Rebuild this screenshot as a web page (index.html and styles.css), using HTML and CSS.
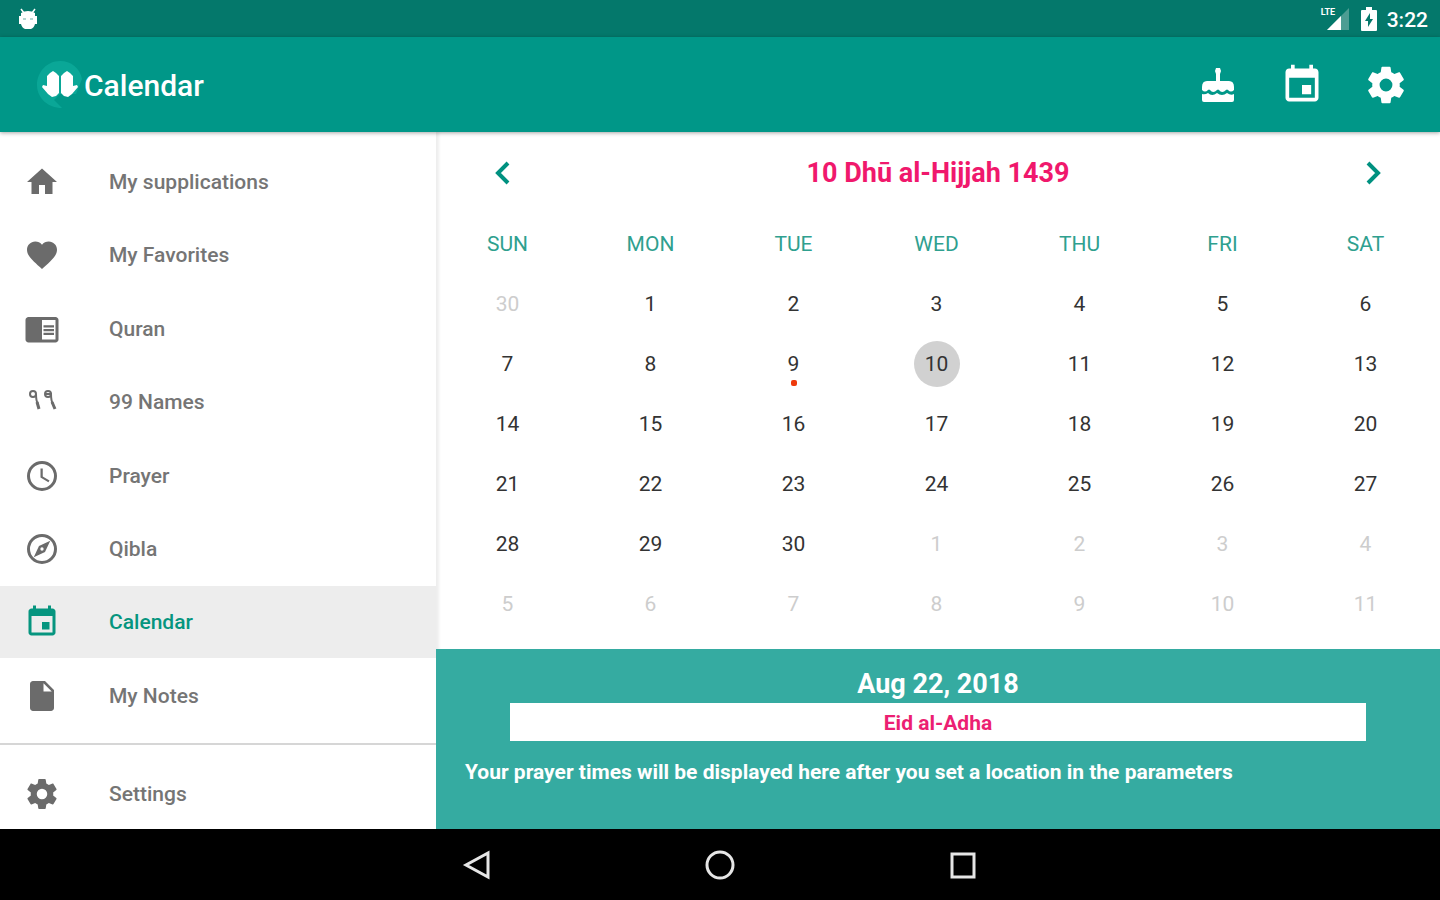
FILE: index.html
```html
<!DOCTYPE html>
<html lang="en">
<head>
<meta charset="utf-8">
<meta name="viewport" content="width=device-width, initial-scale=1">
<title>Calendar</title>
<link rel="stylesheet" href="styles.css">
</head>
<body>
<div class="status">
  <svg class="status-droid" viewBox="0 0 20 22" aria-hidden="true"><path d="M3 1l3 4M17 1l-3 4" stroke="#fff" stroke-width="1.5"/><path d="M3 5q7-4 14 0v3h2v8h-2q-1 4-4 5H7q-3-1-4-5H1V8h2z" fill="#fff"/><path d="M5 11h3M12 11h3" stroke="#9cc9c2" stroke-width="1.5"/></svg>
  <div class="status-right">
    <span class="signal"><span class="lte">LTE</span><svg viewBox="0 0 22 22" aria-hidden="true"><path d="M22 0v22H0z" fill="#4d9d93"/><path d="M14 8v14H0z" fill="#fff"/></svg></span>
    <svg class="battery" viewBox="0 0 16 24" aria-hidden="true"><path d="M5 0h6v3h4q1 0 1 1v19q0 1-1 1H1q-1 0-1-1V4q0-1 1-1h4z" fill="#fff"/><path d="M9 6l-5 8h3v6l5-8H9z" fill="#04786b"/></svg>
    <span class="time">3:22</span>
  </div>
</div>
<header class="toolbar">
  <svg class="logo" viewBox="0 0 48 50" aria-hidden="true"><path d="M26 48C12 48 1 38 1 25S11 1 24 1c11 0 20 7 22 18L40 34H24l-6 6z" fill="#0aa797"/><g fill="#fff"><path d="M17 11l3 2 3 3v17l-3 3-4 1-4-3-6-7 1-2 4 1V16l3-3z"/><path d="M31 11l-3 2-3 3v17l3 3 4 1 4-3 6-7-1-2-4 1V16l-3-3z"/></g></svg>
  <h1 class="title">Calendar</h1>
  <div class="actions">
    <button class="action" aria-label="Birthdays"><svg viewBox="0 0 44 44"><path d="M20 5h4l1 3-1 3v7h9q5 0 5 6v3q-3 3-6 0-1-1-2 0-4 4-7 0-1-1-2 0-4 4-7 0-1-1-2 0-3 3-6 0v-3q0-6 5-6h9v-7l-1-3z"/><path d="M6 31q3 1 6-1 4 4 9 0 5 4 10 0 4 3 7 1v6q0 2-2 2H8q-2 0-2-2z"/></svg></button>
    <button class="action" aria-label="Today"><svg viewBox="0 0 24 24"><path d="M17 12h-5v5h5zM16 1v2H8V1H6v2H5c-1.100 0-2 .9-2 2v14c0 1.100.9 2 2 2h14c1.100 0 2-.9 2-2V5c0-1.100-.9-2-2-2h-1V1zm3 18H5V8h14z"/></svg></button>
    <button class="action" aria-label="Settings"><svg viewBox="0 0 24 24"><path d="M19.430 12.980c.04-.32.07-.64.07-.98s-.03-.66-.07-.98l2.110-1.650c.19-.15.24-.42.12-.64l-2-3.460c-.12-.22-.39-.3-.61-.22l-2.490 1c-.52-.4-1.080-.73-1.690-.98l-.38-2.650C14.460 2.180 14.250 2 14 2h-4c-.25 0-.46.18-.49.42l-.38 2.650c-.61.25-1.170.59-1.690.98l-2.490-1c-.23-.09-.49 0-.61.22l-2 3.460c-.13.22-.07.49.12.64l2.110 1.650c-.04.32-.07.65-.07.98s.03.66.07.98l-2.110 1.650c-.19.15-.24.42-.12.64l2 3.460c.12.22.39.3.61.22l2.490-1c.52.4 1.080.73 1.690.98l.38 2.650c.03.24.24.42.49.42h4c.25 0 .46-.18.49-.42l.38-2.650c.61-.25 1.170-.59 1.690-.98l2.490 1c.23.09.49 0 .61-.22l2-3.460c.12-.22.07-.49-.12-.64zM12 15.500a3.500 3.500 0 1 1 0-7 3.500 3.500 0 0 1 0 7z"/></svg></button>
  </div>
</header>
<div class="body">
  <nav class="drawer" aria-label="Main">
    <div class="menu">
      <a class="item" href="#"><svg viewBox="0 0 24 24"><path d="M10 20v-6h4v6h5v-8h3L12 3 2 12h3v8z"/></svg>My supplications</a>
      <a class="item" href="#"><svg viewBox="0 0 24 24"><path d="M12 21.350l-1.450-1.320C5.400 15.360 2 12.280 2 8.500 2 5.420 4.420 3 7.500 3c1.740 0 3.410.81 4.500 2.090C13.090 3.810 14.760 3 16.500 3 19.580 3 22 5.420 22 8.500c0 3.780-3.400 6.860-8.550 11.540z"/></svg>My Favorites</a>
      <a class="item" href="#"><svg viewBox="0 0 24 24"><path d="M13 12h7v1.500h-7zm0-2.500h7V11h-7zm0 5h7V16h-7zM21 4H3c-1.100 0-2 .9-2 2v13c0 1.100.9 2 2 2h18c1.100 0 2-.9 2-2V6c0-1.100-.9-2-2-2zm0 15h-9V6h9z"/></svg>Quran</a>
      <a class="item" href="#"><svg viewBox="0 0 36 36"><g fill="none" stroke="currentColor" stroke-width="2"><circle cx="9" cy="10" r="3"/><path d="M12 10q0 7 2 10"/><circle cx="24" cy="10" r="3"/><path d="M21 10h6q0 7 2 10"/><path d="M13 18l2 7M28 18l3 7" stroke-width="3"/></g></svg>99 Names</a>
      <a class="item" href="#"><svg viewBox="0 0 24 24"><path d="M12 2a10 10 0 1 0 0 20 10 10 0 0 0 0-20zm0 18a8 8 0 1 1 0-16 8 8 0 0 1 0 16zm.5-13H11v6l5.250 3.150.75-1.230-4.500-2.670z"/></svg>Prayer</a>
      <a class="item" href="#"><svg viewBox="0 0 24 24"><path d="M12 2a10 10 0 1 0 0 20 10 10 0 0 0 0-20zm0 18a8 8 0 1 1 0-16 8 8 0 0 1 0 16zm-5.500-2.500l7.510-3.490L17.500 6.500 9.990 9.990zM12 10.900a1.100 1.100 0 1 1 0 2.200 1.100 1.100 0 0 1 0-2.200z"/></svg>Qibla</a>
      <a class="item active" href="#" aria-current="page"><svg viewBox="0 0 24 24"><path d="M17 12h-5v5h5zM16 1v2H8V1H6v2H5c-1.100 0-2 .9-2 2v14c0 1.100.9 2 2 2h14c1.100 0 2-.9 2-2V5c0-1.100-.9-2-2-2h-1V1zm3 18H5V8h14z"/></svg>Calendar</a>
      <a class="item" href="#"><svg viewBox="0 0 24 24"><path d="M6 2c-1.100 0-2 .9-2 2v16c0 1.100.9 2 2 2h12c1.100 0 2-.9 2-2V8l-6-6zm7 7V3.500L18.500 9z"/></svg>My Notes</a>
    </div>
    <hr class="divider">
    <a class="item" href="#"><svg viewBox="0 0 24 24"><path d="M19.430 12.980c.04-.32.07-.64.07-.98s-.03-.66-.07-.98l2.110-1.650c.19-.15.24-.42.12-.64l-2-3.460c-.12-.22-.39-.3-.61-.22l-2.490 1c-.52-.4-1.080-.73-1.690-.98l-.38-2.650C14.460 2.180 14.250 2 14 2h-4c-.25 0-.46.18-.49.42l-.38 2.650c-.61.25-1.170.59-1.690.98l-2.490-1c-.23-.09-.49 0-.61.22l-2 3.460c-.13.22-.07.49.12.64l2.110 1.650c-.04.32-.07.65-.07.98s.03.66.07.98l-2.110 1.650c-.19.15-.24.42-.12.64l2 3.460c.12.22.39.3.61.22l2.490-1c.52.4 1.080.73 1.690.98l.38 2.650c.03.24.24.42.49.42h4c.25 0 .46-.18.49-.42l.38-2.650c.61-.25 1.170-.59 1.690-.98l2.490 1c.23.09.49 0 .61-.22l2-3.460c.12-.22.07-.49-.12-.64zM12 15.500a3.500 3.500 0 1 1 0-7 3.500 3.500 0 0 1 0 7z"/></svg>Settings</a>
  </nav>
  <main class="content">
    <div class="month">
      <button class="arrow" aria-label="Previous month"><svg viewBox="0 0 16 24"><path d="M14 2L4 12l10 10"/></svg></button>
      <h2 class="month-title">10 Dhū al-Hijjah 1439</h2>
      <button class="arrow" aria-label="Next month"><svg viewBox="0 0 16 24"><path d="M2 2l10 10L2 22"/></svg></button>
    </div>
    <div class="grid-wrap">
    <table class="grid">
      <thead><tr><th>SUN</th><th>MON</th><th>TUE</th><th>WED</th><th>THU</th><th>FRI</th><th>SAT</th></tr></thead>
      <tbody>
        <tr><td><button class="day out">30</button></td><td><button class="day">1</button></td><td><button class="day">2</button></td><td><button class="day">3</button></td><td><button class="day">4</button></td><td><button class="day">5</button></td><td><button class="day">6</button></td></tr>
        <tr><td><button class="day">7</button></td><td><button class="day">8</button></td><td><button class="day marked">9</button></td><td><button class="day selected">10</button></td><td><button class="day">11</button></td><td><button class="day">12</button></td><td><button class="day">13</button></td></tr>
        <tr><td><button class="day">14</button></td><td><button class="day">15</button></td><td><button class="day">16</button></td><td><button class="day">17</button></td><td><button class="day">18</button></td><td><button class="day">19</button></td><td><button class="day">20</button></td></tr>
        <tr><td><button class="day">21</button></td><td><button class="day">22</button></td><td><button class="day">23</button></td><td><button class="day">24</button></td><td><button class="day">25</button></td><td><button class="day">26</button></td><td><button class="day">27</button></td></tr>
        <tr><td><button class="day">28</button></td><td><button class="day">29</button></td><td><button class="day">30</button></td><td><button class="day out">1</button></td><td><button class="day out">2</button></td><td><button class="day out">3</button></td><td><button class="day out">4</button></td></tr>
        <tr><td><button class="day out">5</button></td><td><button class="day out">6</button></td><td><button class="day out">7</button></td><td><button class="day out">8</button></td><td><button class="day out">9</button></td><td><button class="day out">10</button></td><td><button class="day out">11</button></td></tr>
      </tbody>
    </table>
    </div>
    <section class="details">
      <h3 class="date">Aug 22, 2018</h3>
      <p class="event">Eid al-Adha</p>
      <p class="note">Your prayer times will be displayed here after you set a location in the parameters</p>
    </section>
  </main>
</div>
<footer class="navbar">
  <button class="nav" aria-label="Back"><svg viewBox="0 0 30 30"><path d="M26 3v24L4 15z"/></svg></button>
  <button class="nav" aria-label="Home"><svg viewBox="0 0 30 30"><circle cx="15" cy="15" r="13"/></svg></button>
  <button class="nav" aria-label="Recent apps"><svg viewBox="0 0 30 30"><path d="M4 4h22v23H4z"/></svg></button>
</footer>
</body>
</html>
```
FILE: styles.css
```css
* { box-sizing: border-box; }
body {
  margin: 0;
  min-height: 100vh;
  display: flex;
  flex-direction: column;
  background: #fff;
  font-family: Roboto, "Noto Sans", sans-serif;
}
h1, h2, h3, p { margin: 0; }
button {
  padding: 0;
  border: 0;
  background: none;
  font: inherit;
  color: inherit;
  cursor: pointer;
}
svg { display: block; }

.status {
  height: 37px;
  padding: 0 12px 0 18px;
  display: flex;
  align-items: center;
  justify-content: space-between;
  background: #04786b;
  color: #fff;
}
.status-droid { width: 20px; height: 22px; }
.status-right { display: flex; align-items: center; gap: 10px; }
.signal { display: flex; align-items: flex-start; position: relative; padding-left: 6px; margin-right: 2px; }
.signal svg { width: 22px; height: 22px; }
.lte { position: absolute; left: 0; top: -2px; font-size: 9px; font-weight: 700; line-height: 12px; }
.battery { width: 16px; height: 24px; }
.time { font-size: 21px; font-weight: 500; line-height: 26px; padding-top: 2px; }

.toolbar {
  height: 95px;
  padding: 0 32px 0 36px;
  display: flex;
  align-items: center;
  background: #009788;
  color: #fff;
  position: relative;
  box-shadow: 0 1px 4px rgba(0, 0, 0, .35);
}
.logo { width: 48px; height: 50px; }
.title { font-size: 30px; font-weight: 500; line-height: 36px; padding-top: 3px; }
.actions { margin-left: auto; display: flex; gap: 40px; }
.action svg { width: 44px; height: 44px; fill: #fff; }

.body { flex: 1; display: flex; }
.drawer {
  flex: 0 0 436px;
  padding-top: 13px;
  display: flex;
  flex-direction: column;
}
.menu { flex: 1; display: grid; grid-auto-rows: 1fr; }
.item {
  min-height: 71px;
  padding-left: 24px;
  display: flex;
  align-items: center;
  gap: 49px;
  color: #757575;
  font-size: 21px;
  font-weight: 500;
  text-decoration: none;
}
.item svg { width: 36px; height: 36px; fill: #6b6b6b; color: #6b6b6b; }
.active { background: #ededed; color: #06957f; margin-bottom: 2px; }
.active svg { fill: #06957f; }
.divider { width: 100%; height: 2px; margin: 10px 0 13px; border: 0; background: #d6d6d6; }

.content {
  flex: 1;
  display: flex;
  flex-direction: column;
  box-shadow: inset 4px 0 3px -1px #eee;
}
.month { height: 82px; padding: 0 56px; display: flex; align-items: center; justify-content: space-between; }
.arrow svg { width: 20px; height: 24px; fill: none; stroke: #009180; stroke-width: 4; }
.month-title { color: #f0186c; font-size: 27px; font-weight: 700; line-height: 32px; }
.grid-wrap { padding-right: 3px; }
.grid { width: 100%; border-collapse: collapse; table-layout: fixed; }
.grid th, .grid td { height: 60px; padding: 0; text-align: center; vertical-align: middle; }
.grid th { color: #2fa08f; font-size: 21px; font-weight: 400; }
.day {
  position: relative;
  width: 46px;
  height: 46px;
  border-radius: 50%;
  color: #333;
  font-size: 21px;
  display: block;
  margin: 0 auto;
}
.out { color: #cdcdcd; }
.selected { background: #d1d1d1; }
.marked::after {
  content: "";
  position: absolute;
  left: 20px;
  bottom: 1px;
  width: 6px;
  height: 6px;
  border-radius: 2px;
  background: #ee3a0c;
}
.details {
  flex: 1;
  margin-top: 15px;
  padding: 17px 0;
  background: #35aba1;
  color: #fff;
  font-weight: 700;
}
.date { font-size: 27px; line-height: 36px; padding-bottom: 1px; text-align: center; }
.event {
  margin: 0 74px;
  padding-top: 2px;
  background: #fff;
  color: #ec1f72;
  font-size: 21px;
  font-weight: 700;
  line-height: 36px;
  text-align: center;
}
.note { margin: 17px 29px 0; font-size: 21px; line-height: 28px; }

.navbar { height: 71px; display: flex; align-items: center; justify-content: center; gap: 213px; background: #000; }
.nav svg { width: 30px; height: 30px; fill: none; stroke: #e6e6e6; stroke-width: 3; }
```
